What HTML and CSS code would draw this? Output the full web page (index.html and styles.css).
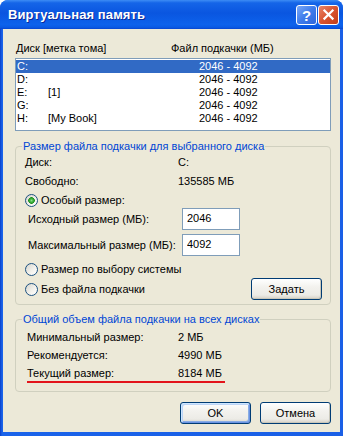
FILE: index.html
```html
<!DOCTYPE html>
<html lang="ru">
<head>
<meta charset="UTF-8">
<meta name="viewport" content="width=device-width, initial-scale=1.0">
<title>Виртуальная память</title>
<link rel="stylesheet" href="styles.css">
</head>
<body>
<div class="window">
  <div class="titlebar">
    <span class="title">Виртуальная память</span>
    <div class="title-buttons">
      <button type="button" class="tb-btn help">?</button>
      <button type="button" class="tb-btn close">
        <svg width="21" height="20" viewBox="0 0 21 20"><path d="M6 5 L15 14 M15 5 L6 14" stroke="#fff" stroke-width="2.4" stroke-linecap="square"/></svg>
      </button>
    </div>
  </div>

  <div class="content">
    <div class="list-head">
      <span>Диск [метка тома]</span>
      <span>Файл подкачки (МБ)</span>
    </div>
    <div class="listbox">
      <div class="list-row selected"><span>C:</span><span></span><span>2046 - 4092</span></div>
      <div class="list-row"><span>D:</span><span></span><span>2046 - 4092</span></div>
      <div class="list-row"><span>E:</span><span>[1]</span><span>2046 - 4092</span></div>
      <div class="list-row"><span>G:</span><span></span><span>2046 - 4092</span></div>
      <div class="list-row"><span>H:</span><span>[My Book]</span><span>2046 - 4092</span></div>
    </div>

    <fieldset class="group group-disk">
      <legend>Размер файла подкачки для выбранного диска</legend>
      <div class="group-body">
        <div class="info-row"><span>Диск:</span><span>C:</span></div>
        <div class="info-row second"><span>Свободно:</span><span>135585 МБ</span></div>
        <label class="radio-row custom"><input type="radio" name="mode" class="radio" checked>Особый размер:</label>
        <div class="size-row first"><span>Исходный размер (МБ):</span><input type="text" class="field" value="2046"></div>
        <div class="size-row"><span>Максимальный размер (МБ):</span><input type="text" class="field" value="4092"></div>
        <label class="radio-row system"><input type="radio" name="mode" class="radio">Размер по выбору системы</label>
        <div class="last-row">
          <label class="radio-row"><input type="radio" name="mode" class="radio">Без файла подкачки</label>
          <button type="button" class="btn">Задать</button>
        </div>
      </div>
    </fieldset>

    <fieldset class="group group-total">
      <legend>Общий объем файла подкачки на всех дисках</legend>
      <div class="group-body">
        <div class="total-row"><span>Минимальный размер:</span><span>2 МБ</span></div>
        <div class="total-row"><span>Рекомендуется:</span><span>4990 МБ</span></div>
        <div class="total-row"><span>Текущий размер:</span><span>8184 МБ</span></div>
        <div class="mark"></div>
      </div>
    </fieldset>

    <div class="dialog-buttons">
      <button type="button" class="btn default">OK</button>
      <button type="button" class="btn">Отмена</button>
    </div>
  </div>
</div>
</body>
</html>
```

FILE: styles.css
```css
body {
  margin: 0;
  background: #fff;
  font-family: "Liberation Sans", Arial, sans-serif;
  font-size: 11px;
  line-height: 13px;
  color: #000;
}
.window {
  width: 343px;
  height: 436px;
  display: flex;
  flex-direction: column;
  border-radius: 8px 8px 0 0;
  background: linear-gradient(90deg, #0a3fc8 0, #1a63ea 2px, #1a5fe6 100%);
  box-sizing: border-box;
  padding: 0 3px 4px 3px;
}
.titlebar {
  height: 29px;
  margin: 0 -3px;
  display: flex;
  align-items: center;
  justify-content: space-between;
  padding: 0 4px 0 8px;
  border-radius: 8px 8px 0 0;
  background: linear-gradient(180deg, #3d8cf5 0%, #1565e8 10%, #0a56e0 45%, #0d62ec 85%, #0a5ae4 94%, #0845d0 100%);
}
.title {
  color: #fff;
  font-weight: bold;
  font-size: 13px;
  text-shadow: 1px 1px #0b2a9a;
  letter-spacing: 0.1px;
}
.title-buttons {
  display: flex;
  gap: 1px;
  margin-top: 1px;
}
.tb-btn {
  width: 21px;
  height: 20px;
  padding: 0;
  border: 1px solid #fff;
  border-radius: 3px;
  display: flex;
  align-items: center;
  justify-content: center;
  color: #fff;
  font-family: "Liberation Sans", Arial, sans-serif;
  font-weight: bold;
  font-size: 15px;
}
.help {
  background: linear-gradient(135deg, #7aa8f7 0%, #3f7ceb 50%, #2d66dc 100%);
}
.close {
  background: linear-gradient(135deg, #e8866a 0%, #d9532f 50%, #c23d18 100%);
}
.content {
  flex: 1;
  background: #ece9d8;
  padding: 13px 9px 0 12px;
}
.list-head {
  display: grid;
  grid-template-columns: 155px 1fr;
  padding-left: 1px;
}
.listbox {
  margin-top: 3px;
  height: 73px;
  box-sizing: border-box;
  border: 1px solid #7f9db9;
  background: #fff;
  padding-top: 1px;
}
.list-row {
  display: grid;
  grid-template-columns: 31px 151px 1fr;
  height: 13px;
  padding-left: 1px;
}
.list-row.selected {
  background: #316ac5;
  color: #fff;
}
.group {
  margin: 9px 0 0 0;
  padding: 0;
  min-width: 0;
  border: 1px solid #d0d0bf;
  border-radius: 4px;
}
.group legend {
  margin-left: 6px;
  padding: 0 1px;
  color: #0046d5;
  line-height: 13px;
}
.group-total {
  margin-top: 8px;
}
.group-disk .group-body {
  padding: 3px 0 4px 9px;
}
.group-total .group-body {
  padding: 5px 0 8px 11px;
  display: flex;
  flex-direction: column;
  gap: 5px;
}
.info-row {
  display: grid;
  grid-template-columns: 153px 1fr;
}
.info-row.second {
  margin-top: 6px;
}
.radio-row {
  display: flex;
  align-items: center;
  height: 14px;
}
.radio-row.custom {
  margin-top: 5px;
}
.radio-row.system {
  margin-top: 6px;
}
.radio {
  appearance: none;
  -webkit-appearance: none;
  width: 13px;
  height: 13px;
  margin: 0 3px 0 0;
  border: 1px solid #1c5180;
  border-radius: 50%;
  background: linear-gradient(135deg, #d6d5cc 0%, #f4f3ee 60%, #fff 100%);
  box-sizing: border-box;
}
.radio:checked {
  background: radial-gradient(circle, #8fe08c 0, #45b845 1.5px, #1f8f1f 3px, transparent 3.6px),
    linear-gradient(135deg, #d6d5cc 0%, #f4f3ee 60%, #fff 100%);
}
.size-row {
  display: grid;
  grid-template-columns: 154px 58px;
  align-items: center;
  padding-left: 3px;
  margin-top: 4px;
}
.size-row.first {
  margin-top: 1px;
}
.field {
  height: 22px;
  width: 58px;
  box-sizing: border-box;
  border: 1px solid #7f9db9;
  padding: 0 4px 2px;
  font-family: "Liberation Sans", Arial, sans-serif;
  font-size: 11px;
  background: #fff;
}
.last-row {
  display: flex;
  align-items: center;
  justify-content: space-between;
  margin-top: 2px;
  padding-right: 8px;
}
.btn {
  width: 71px;
  height: 22px;
  padding: 0;
  border: 1px solid #003c74;
  border-radius: 3px;
  background: linear-gradient(180deg, #fff 0%, #f3f2ee 40%, #ecebe6 80%, #d6d0c5 100%);
  box-shadow: inset -1px -1px 0 #c9c7ba;
  font-family: "Liberation Sans", Arial, sans-serif;
  font-size: 11px;
  color: #000;
}
.btn.default {
  box-shadow: inset 1px 1px 0 #cee7ff, inset -1px -1px 0 #6b93e3,
    inset 2px 2px 0 #bcd4f6, inset -2px -2px 0 #89ade4;
}
.total-row {
  display: grid;
  grid-template-columns: 151px 1fr;
}
.mark {
  height: 2px;
  width: 198px;
  margin-top: -4px;
  background: #e3141b;
}
.dialog-buttons {
  display: flex;
  justify-content: flex-end;
  gap: 9px;
  margin-top: 10px;
}
```
